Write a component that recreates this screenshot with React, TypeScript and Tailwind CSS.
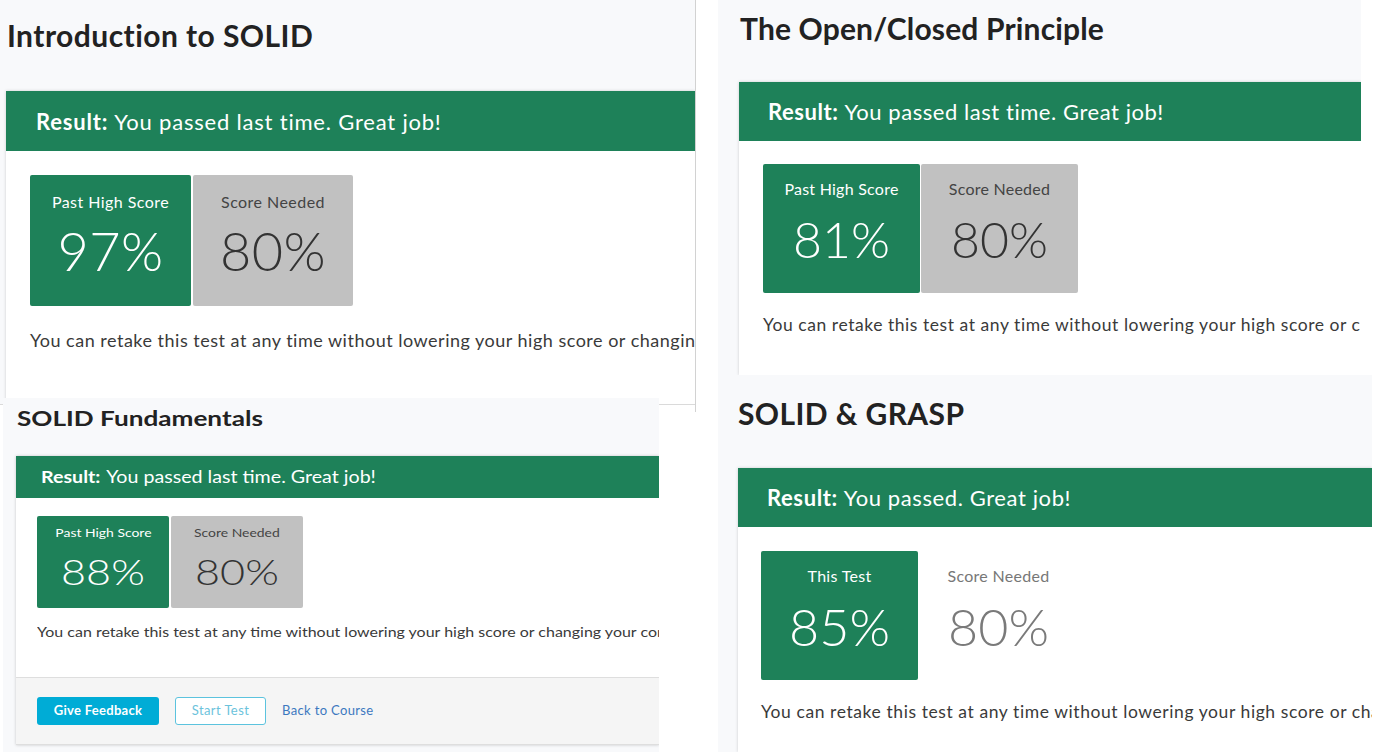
import React from "react";

type BoxProps = {
  label: string;
  value: string;
  boxCls: string;
  labelCls: string;
  valueCls: string;
};

function ScoreBox({ label, value, boxCls, labelCls, valueCls }: BoxProps) {
  return (
    <div className={boxCls}>
      <div className={labelCls}>{label}</div>
      <div className={valueCls}>{value}</div>
    </div>
  );
}

export default function App() {
  return (
    <div className="w-[1399px] h-[752px] overflow-hidden bg-white flex font-['Lato',sans-serif]">
      {/* Left column */}
      <div className="w-[696px] shrink-0 flex flex-col">
        {/* Panel 1 */}
        <div className="w-[696px] h-[412px] shrink-0 bg-white border-r border-[#d2d2d2] overflow-hidden">
          <div className="h-[405px] bg-[#f8f9fb] border-b border-[#dadada] flex flex-col pl-[6px] overflow-hidden">
            <h1 className="mt-[20px] ml-[1px] text-[30px] leading-[30px] font-bold text-[#222] tracking-[0.45px]">
              Introduction to SOLID
            </h1>
            <div className="mt-[41px] flex-1 bg-white shadow-[0_0_3px_rgba(0,0,0,0.18)] flex flex-col">
              <div className="h-[60px] shrink-0 bg-[#1e8159] flex items-center pl-[30px] text-white text-[22px] tracking-[0.8px] whitespace-nowrap">
                <span className="font-bold">Result:</span>
                <span className="ml-[6px]">You passed last time. Great job!</span>
              </div>
              <div className="pl-[24px] pt-[24px] flex flex-col">
                <div className="flex gap-[2px]">
                  <ScoreBox
                    label="Past High Score"
                    value="97%"
                    boxCls="w-[161px] h-[131px] bg-[#1e8159] rounded-[2px] flex flex-col items-center text-white"
                    labelCls="mt-[19px] text-[16px] leading-[16px] tracking-[0.45px]"
                    valueCls="mt-[14px] text-[54px] leading-[54px] font-light tracking-[0.5px]"
                  />
                  <ScoreBox
                    label="Score Needed"
                    value="80%"
                    boxCls="w-[160px] h-[131px] bg-[#c1c1c1] rounded-[2px] flex flex-col items-center text-[#333]"
                    labelCls="mt-[19px] text-[16px] leading-[16px] tracking-[0.45px] text-[#444]"
                    valueCls="mt-[14px] text-[54px] leading-[54px] font-light tracking-[0.5px]"
                  />
                </div>
                <p className="mt-[25px] text-[18px] leading-[18px] tracking-[0.5px] text-[#3a3a3a] whitespace-nowrap">
                  You can retake this test at any time without lowering your high score or changing your completion status.
                </p>
              </div>
            </div>
          </div>
        </div>

        {/* Panel 3 */}
        <div className="relative z-10 -mt-[14px] ml-[3px] w-[656px] h-[354px] shrink-0 bg-[#f8f9fb] overflow-hidden flex flex-col pl-[13px]">
          <h2 className="mt-[10px] ml-[1px] text-[21px] leading-[20px] font-bold text-[#222] scale-x-[1.245] origin-left whitespace-nowrap">
            SOLID Fundamentals
          </h2>
          <div className="mt-[28px] bg-white shadow-[0_0_3px_rgba(0,0,0,0.2)] flex flex-col">
            <div className="h-[42px] shrink-0 bg-[#1e8159] flex items-center pl-[25px] text-white text-[17px] whitespace-nowrap">
              <div className="scale-x-[1.155] origin-left">
                <span className="font-bold">Result:</span>
                <span className="ml-[5px]">You passed last time. Great job!</span>
              </div>
            </div>
            <div className="h-[179px] pl-[21px] pt-[18px] flex flex-col">
              <div className="flex gap-[2px]">
                <ScoreBox
                  label="Past High Score"
                  value="88%"
                  boxCls="w-[132px] h-[92px] bg-[#1e8159] rounded-[2px] flex flex-col items-center text-white"
                  labelCls="mt-[11px] text-[12px] leading-[12px] scale-x-[1.16] whitespace-nowrap"
                  valueCls="mt-[14px] text-[36px] leading-[36px] font-light scale-x-[1.2] whitespace-nowrap"
                />
                <ScoreBox
                  label="Score Needed"
                  value="80%"
                  boxCls="w-[132px] h-[92px] bg-[#c1c1c1] rounded-[2px] flex flex-col items-center text-[#333]"
                  labelCls="mt-[11px] text-[12px] leading-[12px] text-[#444] scale-x-[1.16] whitespace-nowrap"
                  valueCls="mt-[14px] text-[36px] leading-[36px] font-light scale-x-[1.2] whitespace-nowrap"
                />
              </div>
              <p className="mt-[17px] text-[14px] leading-[14px] text-[#3a3a3a] whitespace-nowrap scale-x-[1.142] origin-left">
                You can retake this test at any time without lowering your high score or changing your completion status.
              </p>
            </div>
            <div className="h-[68px] bg-[#f5f5f5] border-t border-b border-[#dedede] flex items-center pl-[21px] gap-[16px]">
              <button className="w-[122px] h-[28px] rounded-[3px] bg-[#00acd6] text-white text-[13px] font-bold tracking-[0.3px]">
                Give Feedback
              </button>
              <button className="w-[91px] h-[28px] rounded-[3px] bg-white border border-[#5cc3de] text-[#6cc3dc] text-[13px] tracking-[0.4px]">
                Start Test
              </button>
              <span className="text-[13px] text-[#3c78c0] tracking-[0.35px]">Back to Course</span>
            </div>
          </div>
        </div>
      </div>

      {/* Right column */}
      <div className="ml-[22px] flex flex-col">
        {/* Panel 2 */}
        <div className="w-[643px] h-[375px] shrink-0 bg-[#f8f9fb] overflow-hidden flex flex-col pl-[21px]">
          <h1 className="mt-[13px] ml-[1px] text-[30px] leading-[30px] font-bold text-[#222] tracking-[0.15px]">
            The Open/Closed Principle
          </h1>
          <div className="mt-[39px] flex-1 bg-white shadow-[0_0_3px_rgba(0,0,0,0.18)] flex flex-col">
            <div className="h-[59px] shrink-0 bg-[#1e8159] flex items-center pl-[29px] text-white text-[22px] tracking-[0.55px] whitespace-nowrap">
              <span className="font-bold">Result:</span>
              <span className="ml-[6px]">You passed last time. Great job!</span>
            </div>
            <div className="pl-[24px] pt-[23px] flex flex-col">
              <div className="flex gap-[1px]">
                <ScoreBox
                  label="Past High Score"
                  value="81%"
                  boxCls="w-[157px] h-[129px] bg-[#1e8159] rounded-[2px] flex flex-col items-center text-white"
                  labelCls="mt-[17px] text-[16px] leading-[16px] tracking-[0.25px]"
                  valueCls="mt-[17px] text-[50px] leading-[50px] font-light"
                />
                <ScoreBox
                  label="Score Needed"
                  value="80%"
                  boxCls="w-[157px] h-[129px] bg-[#c1c1c1] rounded-[2px] flex flex-col items-center text-[#333]"
                  labelCls="mt-[17px] text-[16px] leading-[16px] tracking-[0.25px] text-[#444]"
                  valueCls="mt-[17px] text-[50px] leading-[50px] font-light"
                />
              </div>
              <p className="mt-[23px] text-[17.5px] leading-[18px] tracking-[0.55px] text-[#3a3a3a] whitespace-nowrap">
                You can retake this test at any time without lowering your high score or changing your completion status.
              </p>
            </div>
          </div>
        </div>

        {/* Panel 4 */}
        <div className="w-[654px] h-[377px] shrink-0 bg-[#f8f9fb] overflow-hidden flex flex-col pl-[20px]">
          <h1 className="mt-[23px] ml-[0px] text-[30px] leading-[30px] font-bold text-[#222] tracking-[0.4px]">
            SOLID &amp; GRASP
          </h1>
          <div className="mt-[40px] flex-1 bg-white shadow-[0_0_3px_rgba(0,0,0,0.18)] flex flex-col">
            <div className="h-[59px] shrink-0 bg-[#1e8159] flex items-center pl-[29px] text-white text-[22px] tracking-[0.6px] whitespace-nowrap">
              <span className="font-bold">Result:</span>
              <span className="ml-[6px]">You passed. Great job!</span>
            </div>
            <div className="pl-[23px] pt-[24px] flex flex-col">
              <div className="flex gap-[2px]">
                <ScoreBox
                  label="This Test"
                  value="85%"
                  boxCls="w-[157px] h-[129px] bg-[#1e8159] rounded-[2px] flex flex-col items-center text-white"
                  labelCls="mt-[17px] text-[16px] leading-[16px] tracking-[0.3px]"
                  valueCls="mt-[16px] text-[52px] leading-[52px] font-light"
                />
                <ScoreBox
                  label="Score Needed"
                  value="80%"
                  boxCls="w-[157px] h-[129px] flex flex-col items-center text-[#777]"
                  labelCls="mt-[17px] text-[16px] leading-[16px] tracking-[0.3px] text-[#777]"
                  valueCls="mt-[16px] text-[52px] leading-[52px] font-light text-[#7a7a7a]"
                />
              </div>
              <p className="mt-[23px] text-[17.5px] leading-[18px] tracking-[0.58px] text-[#3a3a3a] whitespace-nowrap">
                You can retake this test at any time without lowering your high score or changing your completion status.
              </p>
            </div>
          </div>
        </div>
      </div>
    </div>
  );
}
